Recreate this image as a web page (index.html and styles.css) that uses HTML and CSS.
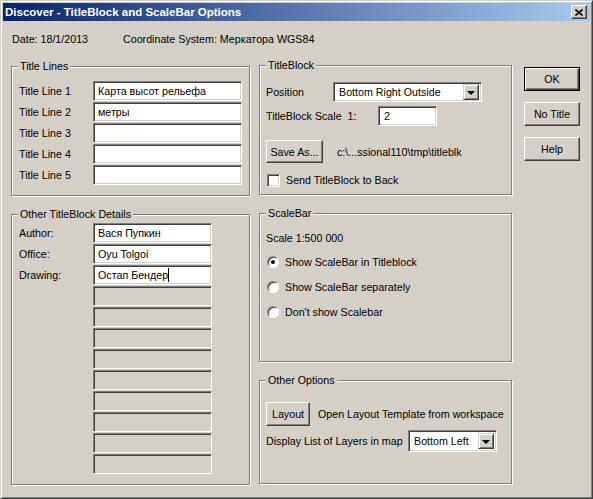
FILE: index.html
```html
<!DOCTYPE html>
<html lang="en">
<head>
  <meta charset="UTF-8">
  <title>Discover - TitleBlock and ScaleBar Options</title>
  <link rel="stylesheet" href="styles.css">
</head>
<body>
  <div class="window">
    <div class="titlebar">
      <span class="title">Discover - TitleBlock and ScaleBar Options</span>
      <span class="close">
        <svg width="8" height="7" viewBox="0 0 8 7"><path d="M0.5 0.5 L7.5 6.5 M7.5 0.5 L0.5 6.5" stroke="#000" stroke-width="1.6" fill="none"/></svg>
      </span>
    </div>
    <div class="content">
      <div class="info">
        <span class="date">Date: 18/1/2013</span>
        <span>Coordinate System: Меркатора WGS84</span>
      </div>
      <div class="main">
        <div class="col-left">
          <div class="group group-lines">
            <div class="legend">Title Lines</div>
            <div class="lines-body">
              <div class="row"><span class="lbl">Title Line 1</span><span class="field w-long">Карта высот рельефа</span></div>
              <div class="row"><span class="lbl">Title Line 2</span><span class="field w-long">метры</span></div>
              <div class="row"><span class="lbl">Title Line 3</span><span class="field w-long"></span></div>
              <div class="row"><span class="lbl">Title Line 4</span><span class="field w-long"></span></div>
              <div class="row"><span class="lbl">Title Line 5</span><span class="field w-long"></span></div>
            </div>
          </div>
          <div class="group group-details">
            <div class="legend">Other TitleBlock Details</div>
            <div class="details-body">
              <div class="row"><span class="lbl">Author:</span><span class="field w-short">Вася Пупкин</span></div>
              <div class="row"><span class="lbl">Office:</span><span class="field w-short">Oyu Tolgoi</span></div>
              <div class="row"><span class="lbl">Drawing:</span><span class="field w-short">Остап Бендер<i class="caret"></i></span></div>
              <div class="row"><span class="lbl"></span><span class="field w-short off"></span></div>
              <div class="row"><span class="lbl"></span><span class="field w-short off"></span></div>
              <div class="row"><span class="lbl"></span><span class="field w-short off"></span></div>
              <div class="row"><span class="lbl"></span><span class="field w-short off"></span></div>
              <div class="row"><span class="lbl"></span><span class="field w-short off"></span></div>
              <div class="row"><span class="lbl"></span><span class="field w-short off"></span></div>
              <div class="row"><span class="lbl"></span><span class="field w-short off"></span></div>
              <div class="row"><span class="lbl"></span><span class="field w-short off"></span></div>
              <div class="row"><span class="lbl"></span><span class="field w-short off"></span></div>
            </div>
          </div>
        </div>

        <div class="col-right">
          <div class="group group-block">
            <div class="legend">TitleBlock</div>
            <div class="block-body">
              <div class="row row-pos">
                <span class="lbl-pos">Position</span>
                <span class="select w-pos"><span class="select-text">Bottom Right Outside</span><span class="drop"><i class="arrow"></i></span></span>
              </div>
              <div class="row row-scale">
                <span class="lbl-scale">TitleBlock Scale &nbsp;1:</span>
                <span class="field w-scale">2</span>
              </div>
              <div class="row row-save">
                <span class="btn btn-save">Save As...</span>
                <span class="path">c:\...ssional110\tmp\titleblk</span>
              </div>
              <div class="row row-check">
                <span class="check"></span>
                <span>Send TitleBlock to Back</span>
              </div>
            </div>
          </div>
          <div class="group group-scale">
            <div class="legend">ScaleBar</div>
            <div class="scale-body">
              <div class="scale-text">Scale 1:500 000</div>
              <div class="radio-row"><span class="radio on"></span><span>Show ScaleBar in Titleblock</span></div>
              <div class="radio-row"><span class="radio"></span><span>Show ScaleBar separately</span></div>
              <div class="radio-row"><span class="radio"></span><span>Don't show Scalebar</span></div>
            </div>
          </div>
          <div class="group group-options">
            <div class="legend">Other Options</div>
            <div class="options-body">
              <div class="row row-layout">
                <span class="btn btn-layout">Layout</span>
                <span>Open Layout Template from workspace</span>
              </div>
              <div class="row row-layers">
                <span class="lbl-layers">Display List of Layers in map</span>
                <span class="select w-layers"><span class="select-text">Bottom Left</span><span class="drop"><i class="arrow"></i></span></span>
              </div>
            </div>
          </div>
        </div>

        <div class="col-buttons">
          <span class="btn btn-side btn-default">OK</span>
          <span class="btn btn-side">No Title</span>
          <span class="btn btn-side">Help</span>
        </div>
      </div>
    </div>
  </div>
</body>
</html>
```

FILE: styles.css
```css
* { margin: 0; padding: 0; box-sizing: border-box; }
body {
  background: #d4d0c8;
  font-family: "Liberation Sans", Arial, sans-serif;
  font-size: 10.7px;
  color: #000;
}
.window {
  width: 593px; height: 499px;
  background: #d4d0c8;
  border: 1px solid; border-color: #d4d0c8 #404040 #404040 #d4d0c8;
  box-shadow: inset 1px 1px #fff, inset -1px -1px #808080;
  padding: 2px;
}
.titlebar {
  height: 18px;
  display: flex;
  align-items: center;
  justify-content: space-between;
  padding: 0 3px 0 2px;
  background: linear-gradient(to right, #0a246a, #a6caf0);
  color: #fff;
  font-size: 11.5px; font-weight: bold;
}
.close {
  width: 16px; height: 14px;
  display: flex;
  align-items: center;
  justify-content: center;
  background: #d4d0c8;
  border: 1px solid; border-color: #fff #404040 #404040 #fff;
  box-shadow: inset -1px -1px #808080;
}
.close svg { display: block; }

.content { padding-left: 8px; }
.info {
  height: 44px;
  padding: 11px 0 0 1px;
  line-height: 14px;
  display: flex;
}
.date { width: 111px; }

.main { display: flex; align-items: flex-start; }
.col-left { width: 239px; flex-shrink: 0; }
.col-right { width: 253px; margin-left: 9px; flex-shrink: 0; }
.col-buttons {
  width: 56px;
  margin-left: 12px;
  flex-shrink: 0;
  display: flex;
  flex-direction: column;
}

/* etched group box */
.group {
  border: 1px solid #808080;
  box-shadow: 1px 1px #fff, inset 1px 1px #fff;
}
.legend {
  width: fit-content;
  margin: -8px 0 0 6px;
  padding: 0 2px;
  line-height: 14px;
  background: #d4d0c8;
}
.group-lines { height: 130px; margin-top: 1px; }
.group-details { height: 271px; margin-top: 18px; }
.group-block { height: 130px; }
.group-scale { height: 149px; margin-top: 18px; }
.group-options { height: 104px; margin-top: 18px; }

.row { display: flex; align-items: center; }
.lbl { width: 74px; }

.lines-body { padding: 8px 0 0 7px; }
.lines-body .row + .row { margin-top: 1px; }
.details-body { padding: 2px 0 0 7px; }
.details-body .row + .row { margin-top: 1px; }

/* sunken edit field */
.field {
  display: block;
  height: 20px;
  border: 1px solid; border-color: #808080 #fff #fff #808080;
  box-shadow: inset 1px 1px #404040, inset -1px -1px #d4d0c8;
  background: #fff;
  padding: 0 4px;
  line-height: 18px;
  white-space: nowrap;
}
.field.off { background: #d4d0c8; }
.w-long { width: 149px; }
.w-short { width: 119px; }
.w-scale { width: 59px; padding-left: 5px; }
.caret {
  display: inline-block;
  width: 1px; height: 14px;
  background: #000;
  vertical-align: -3px;
}

/* combo box */
.select {
  display: flex;
  align-items: center;
  height: 20px;
  border: 1px solid; border-color: #808080 #fff #fff #808080;
  box-shadow: inset 1px 1px #404040, inset -1px -1px #d4d0c8;
  background: #fff;
  padding: 2px;
}
.select-text { flex: 1; padding-left: 3px; line-height: 14px; white-space: nowrap; }
.drop {
  width: 16px; height: 16px;
  display: flex;
  align-items: center;
  justify-content: center;
  background: #d4d0c8;
  border: 1px solid; border-color: #d4d0c8 #404040 #404040 #d4d0c8;
  box-shadow: inset 1px 1px #fff, inset -1px -1px #808080;
}
.arrow {
  width: 0; height: 0;
  border-left: 4px solid transparent;
  border-right: 4px solid transparent;
  border-top: 4px solid #000;
  margin-top: 1px;
}
.w-pos { width: 149px; }
.w-layers { width: 89px; height: 22px; }

/* raised button */
.btn {
  display: flex;
  align-items: center;
  justify-content: center;
  height: 24px;
  background: #d4d0c8;
  border: 1px solid; border-color: #fff #404040 #404040 #fff;
  box-shadow: inset -1px -1px #808080;
  white-space: nowrap;
}
.btn-default {
  border-color: #000;
  box-shadow: inset 1px 1px #fff, inset -1px -1px #404040, inset -2px -2px #808080;
}
.btn-side { height: 24px; }
.btn-side + .btn-side { margin-top: 11px; }
.btn-default { margin-top: 2px; }

.block-body { padding: 10px 0 0 6px; }
.lbl-pos { width: 67px; }
.lbl-scale { width: 112px; }
.row-scale { margin-top: 4px; }
.row-save { margin-top: 14px; }
.btn-save { width: 57px; height: 23px; }
.path { margin-left: 14px; }
.row-check { margin-top: 10px; height: 14px; }
.check {
  width: 13px; height: 13px;
  margin: 0 6px 0 1px;
  background: #fff;
  border: 1px solid; border-color: #808080 #fff #fff #808080;
  box-shadow: inset 1px 1px #404040, inset -1px -1px #d4d0c8;
}

.scale-body { padding: 11px 0 0 6px; line-height: 14px; }
.radio-row { display: flex; align-items: center; margin-top: 10px; height: 14px; }
.radio-row + .radio-row { margin-top: 11px; }
.radio {
  width: 12px; height: 12px;
  margin: 0 6px 0 1px;
  border-radius: 50%;
  background: #fff;
  border: 1px solid; border-color: #808080 #fff #fff #808080;
  box-shadow: inset 1px 1px #404040;
  display: flex;
  align-items: center;
  justify-content: center;
}
.radio.on::after {
  content: "";
  width: 4px; height: 4px;
  border-radius: 50%;
  background: #000;
}

.options-body { padding: 15px 0 0 6px; }
.btn-layout { width: 44px; }
.row-layout span + span { margin-left: 8px; }
.row-layers { margin-top: 4px; }
.lbl-layers { width: 142px; white-space: nowrap; }
```
